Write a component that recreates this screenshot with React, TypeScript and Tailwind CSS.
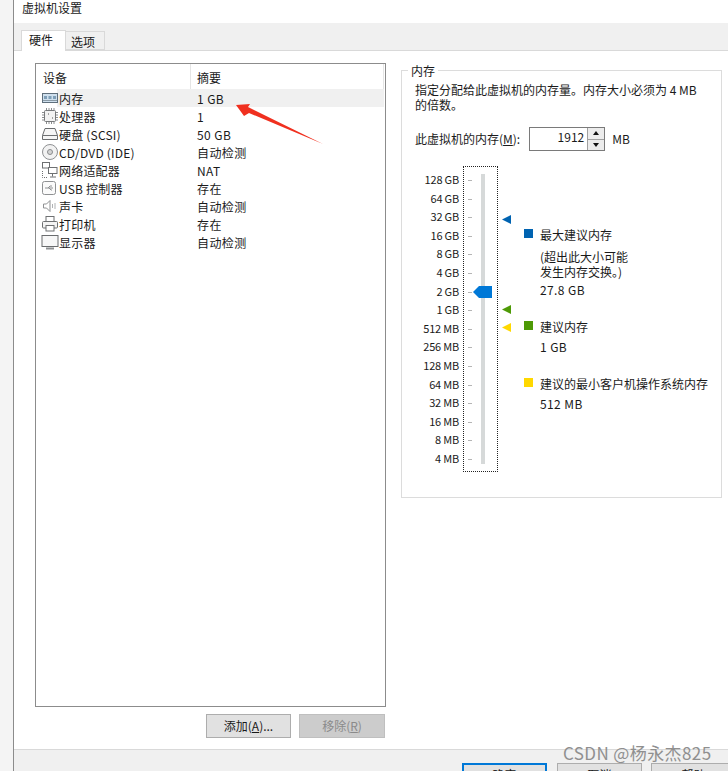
import React from "react";

const font = { fontFamily: '"Noto Sans CJK SC", "Noto Sans", sans-serif' };

const I = ({ children }: { children: React.ReactNode }) => (
  <svg width="18" height="18" viewBox="0 0 18 18" fill="none" stroke="#6e7072" strokeWidth="1" className="shrink-0">
    {children}
  </svg>
);

const icons: Record<string, React.ReactNode> = {
  mem: (
    <>
      <rect x="1.5" y="4.5" width="15" height="9" fill="#cfe0ee" stroke="#5f6f7c" />
      <rect x="3" y="7" width="3" height="3" fill="#7f9fb8" stroke="none" />
      <rect x="7.5" y="7" width="3" height="3" fill="#7f9fb8" stroke="none" />
      <rect x="12" y="7" width="3" height="3" fill="#7f9fb8" stroke="none" />
      <path d="M2 11.5h14" stroke="#8a9aa6" />
    </>
  ),
  cpu: (
    <>
      <rect x="3.5" y="3.5" width="11" height="11" rx="1" fill="#f2f2f2" stroke="#77797b" />
      <path d="M5.5 1v2M8 1v2M10.5 1v2M13 1v2M5.5 15v2M8 15v2M10.5 15v2M13 15v2M1 5.5h2M1 8h2M1 10.5h2M1 13h2M15 5.5h2M15 8h2M15 10.5h2M15 13h2" stroke="#8b8d8f" />
      <path d="M7 7h1M11 11h1" stroke="#555" />
    </>
  ),
  disk: (
    <>
      <path d="M1.5 10.5 4 3.5h10l2.5 7v4h-15z" fill="#f6f6f6" stroke="#6a6c6e" />
      <path d="M1.5 10.5h15" />
    </>
  ),
  cd: (
    <>
      <circle cx="9" cy="9" r="7.5" fill="#f2f2f2" stroke="#8f9193" />
      <circle cx="9" cy="9" r="2.5" fill="#d5d5d5" stroke="#8a8c8e" />
    </>
  ),
  net: (
    <>
      <rect x="1.5" y="1.5" width="7" height="5.5" fill="#fff" />
      <rect x="7.5" y="6.5" width="8.5" height="6" fill="#fff" />
      <path d="M11.5 12.5v3M9 16h6" />
      <path d="M1.5 10v6.5h5" strokeDasharray="1 1" />
    </>
  ),
  usb: (
    <>
      <rect x="1.5" y="2.5" width="13" height="13" rx="2" fill="#fbfbfb" stroke="#8f9193" />
      <path d="M4 9h8M7 9l2-2h2M8 9l2 2h1" stroke="#8f9193" />
    </>
  ),
  sound: (
    <>
      <path d="M2.5 7h3l3.5-3.5v11L5.5 11h-3z" fill="#fff" stroke="#8f9193" />
      <path d="M11.5 7v4M14 6v6" stroke="#b0b2b4" />
    </>
  ),
  print: (
    <>
      <rect x="5" y="1.5" width="8" height="5" fill="#fff" />
      <rect x="1.5" y="6.5" width="15" height="6.5" rx="1" fill="#f4f4f4" />
      <rect x="5" y="10.5" width="8" height="5.5" fill="#fff" />
    </>
  ),
  mon: (
    <>
      <rect x="1" y="2.5" width="16" height="11" fill="#f7f7f7" stroke="#6a6c6e" />
      <path d="M5 15.5h8" stroke="#8f9193" strokeWidth="2" />
    </>
  ),
};

const devices = [
  ["mem", "内存", "1 GB"],
  ["cpu", "处理器", "1"],
  ["disk", "硬盘 (SCSI)", "50 GB"],
  ["cd", "CD/DVD (IDE)", "自动检测"],
  ["net", "网络适配器", "NAT"],
  ["usb", "USB 控制器", "存在"],
  ["sound", "声卡", "自动检测"],
  ["print", "打印机", "存在"],
  ["mon", "显示器", "自动检测"],
];

const scale = ["128 GB", "64 GB", "32 GB", "16 GB", "8 GB", "4 GB", "2 GB", "1 GB", "512 MB", "256 MB", "128 MB", "64 MB", "32 MB", "16 MB", "8 MB", "4 MB"];

const Marker = ({ color }: { color: string }) => (
  <svg width="9" height="9" viewBox="0 0 9 9" className="block">
    <path d="M0 4.5 9 0v9z" fill={color} />
  </svg>
);

export default function App() {
  return (
    <div style={font} className="flex w-[728px] h-[771px] overflow-hidden bg-white text-[12px] leading-[14px] text-[#1a1a1a]">
      <div className="w-[14px] shrink-0 bg-[#f4f4f4] border-r border-[#8c8c8c]" />
      <div className="flex-1 flex flex-col min-w-0">
        <div className="h-[23px] shrink-0 pl-[8px] pt-[1px] text-[12px]">虚拟机设置</div>
        <div className="h-[28px] shrink-0 bg-[#f0f0f0] border-b border-[#d9d9d9] flex items-end pl-[7px]">
          <div className="relative -mb-px w-[45px] h-[21px] bg-white border border-b-0 border-[#d9d9d9] pl-[7px] pt-[2px] z-10">硬件</div>
          <div className="w-[39px] h-[19px] bg-[#f0f0f0] border border-l-0 border-[#d9d9d9] pl-[5px] pt-[3px]">选项</div>
        </div>
        <div className="flex-1 min-h-0 flex pl-[21px] pt-[12px]">
          <div className="w-[351px] shrink-0 flex flex-col">
            <div className="h-[644px] border border-[#8c8c8c] flex flex-col">
              <div className="h-[25px] flex shrink-0">
                <div className="w-[155px] border-r border-[#e5e5e5] pl-[7px] pt-[7px]">设备</div>
                <div className="w-[193px] border-r border-[#e5e5e5] pl-[6px] pt-[7px]">摘要</div>
              </div>
              {devices.map(([ic, name, val], i) => (
                <div key={name} className="h-[18px] flex items-center relative isolate">
                  <div className="w-[155px] flex items-center pl-[5px] shrink-0">
                    <I>{icons[ic]}</I>
                    <span className="pt-[2px] tracking-[0.2px]">{name}</span>
                  </div>
                  <span className="pl-[6px] pt-[2px] tracking-[0.4px]">{val}</span>
                  {i === 0 && <div className="absolute left-[21px] right-[1px] top-0 bottom-0 bg-[#f0f0f0] -z-10" />}
                </div>
              ))}
            </div>
            <div className="flex justify-end gap-[8px] pr-[1px] mt-[7px]">
              <button className="w-[85px] h-[24px] bg-[#e1e1e1] border border-[#adadad] text-[12px]">
                添加(<span className="underline">A</span>)...
              </button>
              <button className="w-[86px] h-[24px] bg-[#cccccc] border border-[#bfbfbf] text-[12px] text-[#8a8a8a]">
                移除(<span className="underline">R</span>)
              </button>
            </div>
          </div>
          <div className="relative ml-[15px] mt-[7px] w-[321px] h-[428px] border border-[#dcdcdc] pl-[13px] pr-[8px]">
            <div className="absolute left-[6px] -top-[7px] bg-white px-[3px]">内存</div>
            <div className="pt-[11px] leading-[15px]">
              指定分配给此虚拟机的内存量。内存大小必须为 4 MB<br />的倍数。
            </div>
            <div className="flex items-center mt-[15px] h-[24px]">
              <span>此虚拟机的内存(<span className="underline">M</span>):</span>
              <div className="ml-[9px] w-[76px] h-[24px] border border-[#7a7a7a] flex">
                <div className="flex-1 text-right pr-[3px] pt-[2px]">1912</div>
                <div className="w-[17px] border-l border-[#a0a0a0] flex flex-col">
                  <div className="flex-1 bg-[#ececec] border-b border-[#a0a0a0] flex items-center justify-center">
                    <div className="w-0 h-0 border-x-[3px] border-x-transparent border-b-[4px] border-b-[#111]" />
                  </div>
                  <div className="flex-1 bg-[#ececec] flex items-center justify-center">
                    <div className="w-0 h-0 border-x-[3px] border-x-transparent border-t-[4px] border-t-[#111]" />
                  </div>
                </div>
              </div>
              <span className="ml-[7px]">MB</span>
            </div>
            <div className="flex mt-[15px]">
              <div className="w-[47px] shrink-0 text-right text-[11px] tracking-[-0.2px] pt-[6px] -ml-[3px]">
                {scale.map((s) => (
                  <div key={s} className="h-[18.6px] leading-[14px]">{s}</div>
                ))}
              </div>
              <div className="relative w-[35px] h-[306px] ml-[4px] shrink-0 border border-dotted border-[#222]">
                <div className="absolute left-[17px] top-[7px] bottom-[7px] w-[4px] bg-[#d6d9d9]" />
                {scale.map((s, i) => (
                  <div key={s} className="absolute left-[4px] w-[4px] h-px bg-[#b5b5b5]" style={{ top: 13 + i * 18.6 }} />
                ))}
                <svg width="20" height="12" viewBox="0 0 20 12" className="absolute left-[9px] top-[119px]">
                  <path d="M0 6 6 0h13v12H6z" fill="#0078d7" />
                </svg>
              </div>
              <div className="relative flex-1">
                <div className="absolute left-[4px] top-[49px]"><Marker color="#0063b1" /></div>
                <div className="absolute left-[4px] top-[139px]"><Marker color="#4e9a06" /></div>
                <div className="absolute left-[4px] top-[157px]"><Marker color="#ffd800" /></div>
                <div className="pl-[26px] pt-[62px] flex flex-col">
                  <div className="flex items-center"><span className="w-[9px] h-[9px] -mt-[3px] bg-[#0063b1] mr-[7px]" />最大建议内存</div>
                  <div className="pl-[16px] mt-[7px] leading-[15px]">(超出此大小可能<br />发生内存交换。)</div>
                  <div className="pl-[16px] mt-[4px] tracking-[0.4px]">27.8 GB</div>
                  <div className="flex items-center mt-[23px]"><span className="w-[9px] h-[9px] -mt-[3px] bg-[#4e9a06] mr-[7px]" />建议内存</div>
                  <div className="pl-[16px] mt-[6px] tracking-[0.4px]">1 GB</div>
                  <div className="flex items-center mt-[23px]"><span className="w-[9px] h-[9px] -mt-[3px] bg-[#ffd800] mr-[7px]" />建议的最小客户机操作系统内存</div>
                  <div className="pl-[16px] mt-[6px] tracking-[0.4px]">512 MB</div>
                </div>
              </div>
            </div>
          </div>
        </div>
        <div className="h-[22px] shrink-0 bg-[#f0f0f0] border-t border-[#d9d9d9] flex justify-end gap-[9px] pt-[13px] overflow-hidden">
          <button className="w-[85px] h-[24px] shrink-0 mr-[1px] bg-[#e1e1e1] border-2 border-[#0078d7] text-[12px]">确定</button>
          <button className="w-[85px] h-[24px] shrink-0 bg-[#e1e1e1] border border-[#adadad] text-[12px]">取消</button>
          <button className="w-[85px] h-[24px] shrink-0 -mr-[8px] bg-[#e1e1e1] border border-[#adadad] text-[12px]">帮助</button>
        </div>
      </div>
      <svg width="90" height="60" viewBox="0 0 90 60" className="absolute left-[235px] top-[95px]">
        <path d="M1 10 15 9 13 12 88 49 14 18 9 21z" fill="#f0301f" />
      </svg>
      <div className="absolute left-[563px] top-[744px] text-[17px] leading-[18px] tracking-[0.4px] text-[#8f8f8f]">CSDN @杨永杰825</div>
    </div>
  );
}
